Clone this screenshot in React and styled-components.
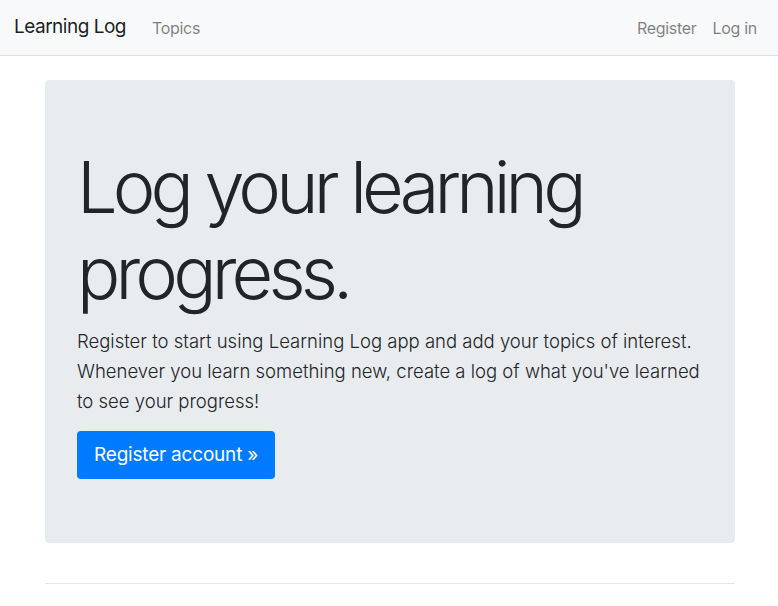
import React from "react";
import styled, { createGlobalStyle } from "styled-components";

const GlobalStyle = createGlobalStyle`
  * { box-sizing: border-box; }
  body {
    margin: 0;
    background: #fff;
    color: #212529;
    font-family: Inter, "Noto Sans", sans-serif;
    font-size: 16px;
    line-height: 1.5;
  }
`;

function App() {
  return (
    <>
      <GlobalStyle />
      <Navbar>
        <Brand href="#">Learning Log</Brand>
        <NavList>
          <NavLink href="#">Topics</NavLink>
        </NavList>
        <NavList $right>
          <NavLink href="#">Register</NavLink>
          <NavLink href="#">Log in</NavLink>
        </NavList>
      </Navbar>
      <Main>
        <Jumbotron>
          <Display>Log your learning progress.</Display>
          <Lead>
            Register to start using Learning Log app and add your topics of
            interest. Whenever you learn something new, create a log of what
            you've learned to see your progress!
          </Lead>
          <PrimaryButton href="#">Register account &raquo;</PrimaryButton>
        </Jumbotron>
        <Rule />
      </Main>
    </>
  );
}

export default App;

const Navbar = styled.nav`
  display: flex;
  align-items: center;
  height: 56px;
  padding: 0 13px 0 14px;
  background: #f8f9fa;
  border-bottom: 1px solid #dee2e6;
`;

const Brand = styled.a`
  font-size: 19px;
  letter-spacing: -0.5px;
  color: rgba(0, 0, 0, 0.9);
  text-decoration: none;
  margin-right: 18px;
`;

const NavList = styled.div`
  display: flex;
  margin-left: ${(p) => (p.$right ? "auto" : "0")};
`;

const NavLink = styled.a`
  font-size: 16px;
  letter-spacing: -0.3px;
  color: rgba(0, 0, 0, 0.5);
  text-decoration: none;
  padding: 0 8px;
`;

const Main = styled.main`
  width: 690px;
  margin: 24px auto 0;
  position: relative;
  left: 1px;
`;

const Jumbotron = styled.div`
  background: #e9ecef;
  border-radius: 4px;
  padding: 64px 32px;
  height: 463px;
`;

const Display = styled.h1`
  margin: 0 0 9px;
  font-size: 72px;
  font-weight: 300;
  line-height: 1.2;
  letter-spacing: -4.85px;
  color: #212529;
`;

const Lead = styled.p`
  margin: 0 0 15px;
  font-size: 18.5px;
  font-weight: 300;
  line-height: 30px;
  color: #212529;
`;

const PrimaryButton = styled.a`
  display: inline-block;
  height: 48px;
  padding: 0 17px;
  line-height: 47px;
  font-size: 19px;
  letter-spacing: -0.2px;
  color: #fff;
  background: #007bff;
  border-radius: 4px;
  text-decoration: none;
`;

const Rule = styled.hr`
  margin: 40px 0 0;
  border: 0;
  border-top: 1px solid rgba(0, 0, 0, 0.1);
`;
